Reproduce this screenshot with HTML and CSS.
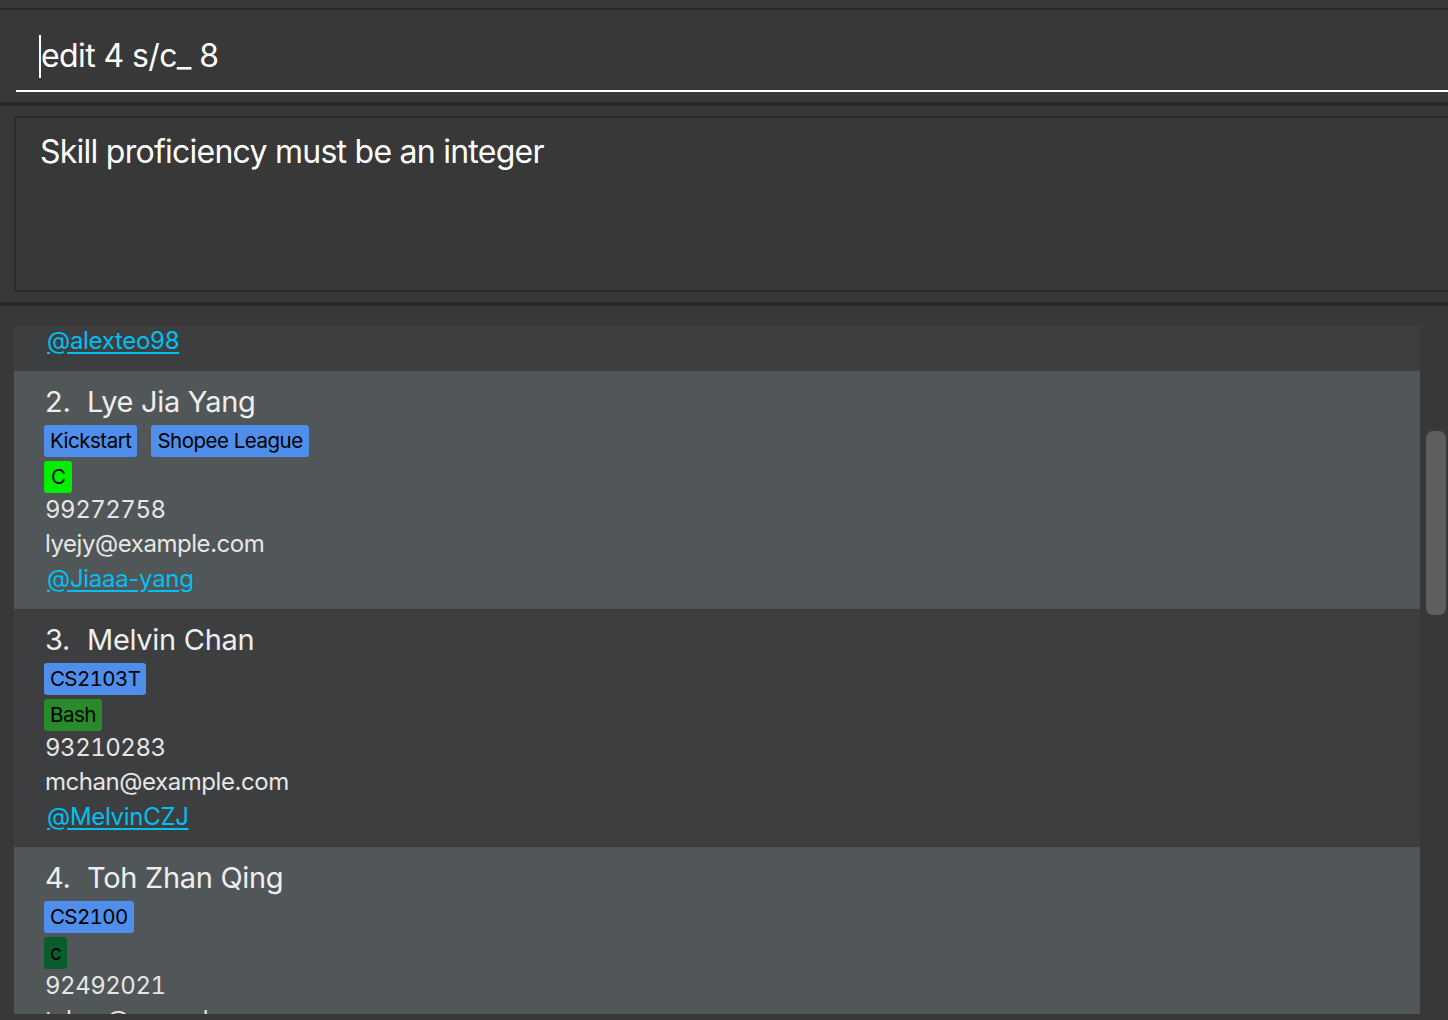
FILE: index.html
```html
<!DOCTYPE html>
<html>
<head>
<meta charset="utf-8">
<link rel="stylesheet" href="styles.css">
</head>
<body>
<div class="app">
  <div class="top-strip"></div>
  <div class="command-pane">
    <div class="command-field"><span class="caret"></span><span class="command-text">edit 4 s/c_ 8</span></div>
  </div>
  <div class="divider"></div>
  <div class="result-pane">
    <div class="result-box">Skill proficiency must be an integer</div>
  </div>
  <div class="divider"></div>
  <div class="list-pane">
    <div class="list-cells">
      <div class="cell cell-dark cell-partial">
        <div class="row-tele"><a class="tele" href="#">@alexteo98</a></div>
      </div>
      <div class="cell cell-light">
        <div class="name"><span class="idx">2.</span>Lye Jia Yang</div>
        <div class="tags"><span class="tag tag-blue">Kickstart</span><span class="tag tag-blue">Shopee League</span></div>
        <div class="tags"><span class="tag tag-lime">C</span></div>
        <div class="row-text phone">99272758</div>
        <div class="row-text">lyejy@example.com</div>
        <div class="row-tele"><a class="tele" href="#">@Jiaaa-yang</a></div>
      </div>
      <div class="cell cell-dark">
        <div class="name"><span class="idx">3.</span>Melvin Chan</div>
        <div class="tags"><span class="tag tag-blue tag-num">CS2103T</span></div>
        <div class="tags"><span class="tag tag-green">Bash</span></div>
        <div class="row-text phone">93210283</div>
        <div class="row-text">mchan@example.com</div>
        <div class="row-tele"><a class="tele" href="#">@MelvinCZJ</a></div>
      </div>
      <div class="cell cell-light">
        <div class="name"><span class="idx">4.</span>Toh Zhan Qing</div>
        <div class="tags"><span class="tag tag-blue tag-num">CS2100</span></div>
        <div class="tags"><span class="tag tag-darkgreen">c</span></div>
        <div class="row-text phone">92492021</div>
        <div class="row-text">tohzq@example.com</div>
      </div>
    </div>
    <div class="scroll-track"><div class="scroll-thumb"></div></div>
  </div>
</div>
</body>
</html>
```

FILE: styles.css
```css
html, body {
  margin: 0;
  padding: 0;
  background: #383838;
  overflow: hidden;
}
.app {
  width: 1448px;
  height: 1020px;
  display: flex;
  flex-direction: column;
  font-family: Inter, "Noto Sans", sans-serif;
  overflow: hidden;
}
.top-strip {
  height: 8px;
  border-bottom: 2px solid #2b2b2b;
  flex: none;
}
.command-pane {
  height: 82px;
  flex: none;
  padding-left: 16px;
  box-sizing: border-box;
}
.command-field {
  height: 82px;
  box-sizing: border-box;
  border-bottom: 2px solid #ffffff;
  display: flex;
  align-items: center;
  padding: 12px 0 0 23px;
  color: #ffffff;
  font-size: 32px;
  letter-spacing: -0.6px;
}
.caret {
  width: 2px;
  height: 43px;
  background: #ffffff;
  flex: none;
}
.command-text {
  margin-top: -2px;
}
.divider {
  height: 4px;
  background: #2b2b2b;
  margin-top: 10px;
  flex: none;
}
.result-pane {
  padding: 10px 0 0 14px;
  flex: none;
}
.result-box {
  height: 176px;
  box-sizing: border-box;
  border: 2px solid #2b2b2b;
  border-right: none;
  padding: 14px 0 0 24px;
  color: #ffffff;
  font-size: 32px;
  line-height: 40px;
  letter-spacing: -0.75px;
}
.list-pane {
  flex: none;
  height: 688px;
  margin-top: 20px;
  display: flex;
  overflow: hidden;
}
.list-cells {
  margin-left: 14px;
  width: 1406px;
  display: flex;
  flex-direction: column;
}
.cell {
  flex: none;
  height: 238px;
  box-sizing: border-box;
  padding: 12px 0 12px 31px;
  color: #e6e6e6;
}
.cell-partial {
  height: 45px;
  padding-top: 0;
  display: flex;
  flex-direction: column;
  justify-content: flex-end;
}
.cell-dark { background: #3c3e3f; }
.cell-light { background: #515658; }
.name {
  height: 38px;
  line-height: 38px;
  font-size: 29px;
  letter-spacing: -0.3px;
  color: #eeeeee;
  white-space: nowrap;
}
.idx {
  display: inline-block;
  width: 42px;
}
.tags {
  display: flex;
  gap: 14px;
  margin-top: 4px;
  margin-left: -1px;
}
.tag {
  height: 32px;
  line-height: 32px;
  padding: 0 6px;
  border-radius: 3px;
  font-size: 20.5px;
  letter-spacing: -0.5px;
  color: #000000;
}
.tag-num {
  font-variant-numeric: tabular-nums;
  letter-spacing: -0.6px;
}
.tag-blue { background: #4f8eeb; }
.tag-lime { background: #00ee00; padding: 0 7px; }
.tag-green { background: #288a28; }
.tag-darkgreen { background: #0b5c2c; }
.row-text {
  height: 34px;
  line-height: 34px;
  font-size: 24px;
  letter-spacing: -0.45px;
}
.phone {
  font-variant-numeric: tabular-nums;
  letter-spacing: -0.5px;
}
.row-tele {
  height: 36px;
  line-height: 36px;
  font-size: 24px;
  letter-spacing: -0.3px;
}
.tele {
  color: #00c0f0;
  text-decoration: underline;
  text-underline-offset: 3px;
  margin-left: 2px;
}
.scroll-track {
  flex: 1;
  padding: 105px 2px 0 6px;
}
.scroll-thumb {
  height: 184px;
  background: #5f5f5f;
  border-radius: 7px;
}
```
